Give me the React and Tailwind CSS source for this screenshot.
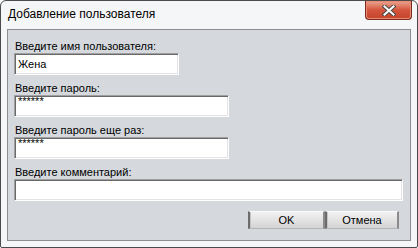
import React from 'react';

const field =
  'h-[22px] bg-white border border-t-[#a0a0a0] border-l-[#a0a0a0] border-b-white border-r-white shadow-[inset_1px_1px_0_#696969,inset_-1px_-1px_0_#e3e3e3] px-[3px] flex items-center text-[11px] text-black';

function Label({ children }) {
  return <div className="h-[13px] leading-[13px] text-[11px] text-black pl-[1px]">{children}</div>;
}

function Btn({ children, className = '' }) {
  return (
    <button
      className={`h-[18px] flex items-center justify-center text-[11px] text-black bg-gradient-to-b from-[#f2f2f2] to-[#d4d4d4] border-l-2 border-r-2 border-l-[#6c6c6c] border-r-[#8a8a8a] border-t border-t-[#fafafa] border-b border-b-[#b4b4b4] shadow-[inset_1px_0_0_#c4c4c4] ${className}`}
    >
      {children}
    </button>
  );
}

export default function App() {
  return (
    <div
      className="w-[418px] h-[248px] flex flex-col bg-[#f5f6f7] border border-[#4b4b4b] rounded-t-[6px] rounded-b-[2px]"
      style={{ fontFamily: '"Liberation Sans", Arial, sans-serif' }}
    >
      {/* title bar */}
      <div className="h-[28px] flex items-start justify-between">
        <div className="pl-[7px] pt-[6px] text-[12px] leading-[15px] text-black">Добавление пользователя</div>
        <div className="mr-[5px] w-[47px] h-[19px] rounded-b-[4px] border border-t-0 border-[#7a2a1f] bg-gradient-to-b from-[#e9a592] via-[#d4553c] to-[#c4442c] shadow-[inset_0_0_0_1px_#e98b74] flex items-center justify-center">
          <svg width="14" height="11" viewBox="0 0 14 11">
            <path d="M2.5 1.5 L11.5 9.5 M11.5 1.5 L2.5 9.5" stroke="#4a4a4a" strokeWidth="4" strokeLinecap="square" />
            <path d="M2.5 1.5 L11.5 9.5 M11.5 1.5 L2.5 9.5" stroke="#ffffff" strokeWidth="2" strokeLinecap="square" />
          </svg>
        </div>
      </div>

      {/* content panel */}
      <div className="flex-1 mx-[6px] mb-[6px] bg-[#d5d9dd] border border-[#8e8e8e] pt-[10px] px-[6px] flex flex-col">
        <Label>Введите имя пользователя:</Label>
        <div className={`${field} w-[165px]`}>Жена</div>

        <div className="mt-[7px]">
          <Label>Введите пароль:</Label>
        </div>
        <div className={`${field} w-[215px] !items-start`}>
          <span className="text-[11px] leading-[10px]">******</span>
        </div>

        <div className="mt-[7px]">
          <Label>Введите пароль еще раз:</Label>
        </div>
        <div className={`${field} w-[215px] !items-start`}>
          <span className="text-[11px] leading-[10px]">******</span>
        </div>

        <div className="mt-[7px]">
          <Label>Введите комментарий:</Label>
        </div>
        <div className={`${field} w-[389px]`}></div>

        <div className="mt-[10px] flex justify-end pr-[5px]">
          <Btn className="w-[77px]">OK</Btn>
          <Btn className="w-[74px]">Отмена</Btn>
        </div>
      </div>
    </div>
  );
}
